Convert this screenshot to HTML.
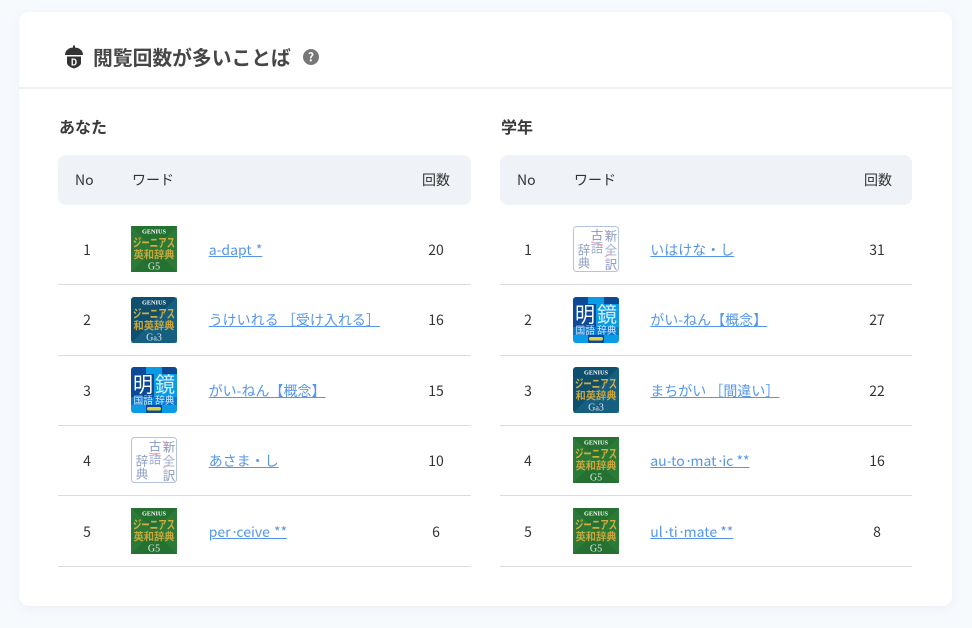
<!DOCTYPE html>
<html lang="ja"><head><meta charset="utf-8">
<style>
html,body{margin:0;padding:0}
body{width:972px;height:628px;overflow:hidden;position:relative;background:#f7fafd;font-family:"Noto Sans CJK JP","Liberation Sans",sans-serif;color:#333}
.a{position:absolute;white-space:nowrap}
.card{position:absolute;left:19px;top:12px;width:933px;height:594px;background:#fff;border-radius:10px;box-shadow:0 2px 10px rgba(225,232,240,.55)}
.hr{position:absolute;left:19px;width:933px;top:87px;height:2px;background:#edf1f6}
.th{position:absolute;top:155px;height:50px;background:#eff2f6;border-radius:8px}
.tx{font-size:14px;line-height:20px}
.c{text-align:center;width:40px}
.ln{position:absolute;height:1px;background:#dcdcdc}
a{color:#5596ea;text-decoration:underline;font-size:14px;line-height:20px}
.d{letter-spacing:-2px}
.w{word-spacing:1px}
svg.b{position:absolute;width:46px;height:46px}
svg text{font-family:"Noto Sans CJK JP","Liberation Sans",sans-serif}
svg text.s{font-family:"Liberation Serif",serif}
.bl{filter:blur(.35px)}
</style></head><body>
<svg width="0" height="0" style="position:absolute"><defs>
<g id="g5" class="bl"><rect width="46" height="46" fill="#2c7a38"/><path d="M0 0L23 23L46 0ZM0 46L23 23L46 46Z" fill="#1f6a2c" opacity=".55"/>
<text class="s" x="23" y="7.500" font-size="6" text-anchor="middle" fill="#fff" font-weight="700" textLength="24" lengthAdjust="spacingAndGlyphs">GENIUS</text>
<text x="23" y="21" font-size="12" text-anchor="middle" fill="#d0ad3e" font-weight="700" textLength="42" lengthAdjust="spacingAndGlyphs">ジーニアス</text>
<text x="23" y="32" font-size="10.500" text-anchor="middle" fill="#c9a63c" font-weight="700" textLength="41" lengthAdjust="spacingAndGlyphs">英和辞典</text>
<text class="s" x="23" y="43.500" font-size="10" text-anchor="middle" fill="#e3ebe3">G5</text></g>
<g id="g3" class="bl"><rect width="46" height="46" rx="3" fill="#0e4f6e"/><path d="M0 46L46 0V46Z" fill="#1d6b8d" opacity=".6"/>
<text class="s" x="23" y="7.500" font-size="6" text-anchor="middle" fill="#fff" font-weight="700" textLength="24" lengthAdjust="spacingAndGlyphs">GENIUS</text>
<text x="23" y="21" font-size="12" text-anchor="middle" fill="#d0ad3e" font-weight="700" textLength="42" lengthAdjust="spacingAndGlyphs">ジーニアス</text>
<text x="23" y="32" font-size="10.500" text-anchor="middle" fill="#c9a63c" font-weight="700" textLength="41" lengthAdjust="spacingAndGlyphs">和英辞典</text>
<text class="s" x="23" y="43.500" font-size="10" text-anchor="middle" fill="#dfe8ef">G<tspan font-size="8">a</tspan>3</text></g>
<g id="mk" class="bl"><rect width="46" height="46" rx="3" fill="#0a9be6"/>
<path d="M3 0H15V7H0V3A3 3 0 0 1 3 0ZM31 0H43A3 3 0 0 1 46 3V7H31ZM0 7H23V30H0ZM15 38H31V46H15Z" fill="#0c4a98"/><path d="M0 30H46V38H0Z" fill="#0a78cf"/>
<text x="12" y="25" font-size="21" text-anchor="middle" fill="#fff" textLength="20" lengthAdjust="spacingAndGlyphs">明</text>
<text x="34" y="25" font-size="21" text-anchor="middle" fill="#d5f0ff" textLength="20" lengthAdjust="spacingAndGlyphs">鏡</text>
<text x="23" y="37" font-size="10" text-anchor="middle" fill="#cfeaff" textLength="41" lengthAdjust="spacingAndGlyphs">国語 辞典</text>
<rect x="16" y="40" width="14" height="3.500" rx="1.700" fill="#e2cf3c"/></g>
<g id="ko" class="bl"><rect x=".5" y=".5" width="45" height="45" rx="3" fill="#fff" stroke="#b3c3e0"/>
<g font-size="12.500" text-anchor="middle">
<text x="38" y="14.500" fill="#8a99c2">新</text><text x="38" y="28.500" fill="#a0add0">全</text><text x="38" y="43" fill="#8a99c2">訳</text>
<text x="24" y="13.500" fill="#8499c6">古</text><text x="24" y="26.500" fill="#9dabd0">語</text>
<text x="11" y="28.500" fill="#8f9fc6">辞</text><text x="11" y="41.500" fill="#8f9fc6">典</text></g>
<path d="M18 16L30 19M32 4L36 8M32 31L37 28" stroke="#f29cab" stroke-width="1" fill="none"/></g>
</defs></svg>

<div class="card"></div><div class="hr"></div>

<svg class="a" style="left:63px;top:45px" width="22" height="24" viewBox="0 0 22 24">
<path d="M11 0.500v2.500" stroke="#333" stroke-width="2"/><path d="M2 10C2 5.500 5.500 2.500 11 2.500S20 5.500 20 10Z" fill="#333"/>
<path d="M4 11.500H18V18C18 20 15 22.500 11 23.500C7 22.500 4 20 4 18Z" fill="#333"/>
<text x="11" y="20.500" font-size="9" font-weight="700" text-anchor="middle" fill="#fff">D</text></svg>
<div class="a" style="left:93px;top:42px;font-size:19.800px;line-height:30px;font-weight:700;color:#464646">閲覧回数が多いことば</div>
<svg class="a" style="left:303px;top:49px" width="16" height="16" viewBox="0 0 16 16"><circle cx="8" cy="8" r="8" fill="#777"/><text x="8" y="12.500" font-size="12" font-weight="700" text-anchor="middle" fill="#fff">?</text></svg>

<div class="a" style="left:59px;top:114px;font-size:16px;line-height:24px;font-weight:700;color:#3a3a3a">あなた</div>
<div class="a" style="left:501px;top:114px;font-size:16px;line-height:24px;font-weight:700;color:#3a3a3a">学年</div>

<div class="th" style="left:58px;width:413px"></div>
<div class="th" style="left:500px;width:412px"></div>
<div class="a tx" style="left:75px;top:170px">No</div><div class="a tx" style="left:132px;top:170px">ワード</div><div class="a tx" style="left:422px;top:170px">回数</div>
<div class="a tx" style="left:517px;top:170px">No</div><div class="a tx" style="left:574px;top:170px">ワード</div><div class="a tx" style="left:864px;top:170px">回数</div>

<div class="a tx c" style="left:67px;top:240px">1</div><svg class="b" style="left:131px;top:226px"><use href="#g5"/></svg><a class="a w" style="left:208.700px;top:240px">a-dapt *</a><div class="a tx c" style="left:416px;top:240px">20</div><div class="ln" style="left:58px;width:413px;top:284px"></div>
<div class="a tx c" style="left:67px;top:310px">2</div><svg class="b" style="left:131px;top:297px"><use href="#g3"/></svg><a class="a" style="left:208.700px;top:310px">うけいれる ［受け入れる］</a><div class="a tx c" style="left:416px;top:310px">16</div><div class="ln" style="left:58px;width:413px;top:355px"></div>
<div class="a tx c" style="left:67px;top:381px">3</div><svg class="b" style="left:131px;top:367px"><use href="#mk"/></svg><a class="a" style="left:208.700px;top:381px">がい-ねん【概念】</a><div class="a tx c" style="left:416px;top:381px">15</div><div class="ln" style="left:58px;width:413px;top:425px"></div>
<div class="a tx c" style="left:67px;top:451px">4</div><svg class="b" style="left:131px;top:437px"><use href="#ko"/></svg><a class="a" style="left:208.700px;top:451px">あさま・し</a><div class="a tx c" style="left:416px;top:451px">10</div><div class="ln" style="left:58px;width:413px;top:495px"></div>
<div class="a tx c" style="left:67px;top:522px">5</div><svg class="b" style="left:131px;top:508px"><use href="#g5"/></svg><a class="a w" style="left:208.700px;top:522px">per<span class="d">·</span>ceive **</a><div class="a tx c" style="left:416px;top:522px">6</div><div class="ln" style="left:58px;width:413px;top:566px"></div>

<div class="a tx c" style="left:508px;top:240px">1</div><svg class="b" style="left:573px;top:226px"><use href="#ko"/></svg><a class="a" style="left:650.300px;top:240px">いはけな・し</a><div class="a tx c" style="left:857px;top:240px">31</div><div class="ln" style="left:500px;width:412px;top:284px"></div>
<div class="a tx c" style="left:508px;top:310px">2</div><svg class="b" style="left:573px;top:297px"><use href="#mk"/></svg><a class="a" style="left:650.300px;top:310px">がい-ねん【概念】</a><div class="a tx c" style="left:857px;top:310px">27</div><div class="ln" style="left:500px;width:412px;top:355px"></div>
<div class="a tx c" style="left:508px;top:381px">3</div><svg class="b" style="left:573px;top:367px"><use href="#g3"/></svg><a class="a" style="left:650.300px;top:381px">まちがい ［間違い］</a><div class="a tx c" style="left:857px;top:381px">22</div><div class="ln" style="left:500px;width:412px;top:425px"></div>
<div class="a tx c" style="left:508px;top:451px">4</div><svg class="b" style="left:573px;top:437px"><use href="#g5"/></svg><a class="a" style="left:650.300px;top:451px">au-to<span class="d">·</span>mat<span class="d">·</span>ic **</a><div class="a tx c" style="left:857px;top:451px">16</div><div class="ln" style="left:500px;width:412px;top:495px"></div>
<div class="a tx c" style="left:508px;top:522px">5</div><svg class="b" style="left:573px;top:508px"><use href="#g5"/></svg><a class="a" style="left:650.300px;top:522px">ul<span class="d">·</span>ti<span class="d">·</span>mate **</a><div class="a tx c" style="left:857px;top:522px">8</div><div class="ln" style="left:500px;width:412px;top:566px"></div>
</body></html>
